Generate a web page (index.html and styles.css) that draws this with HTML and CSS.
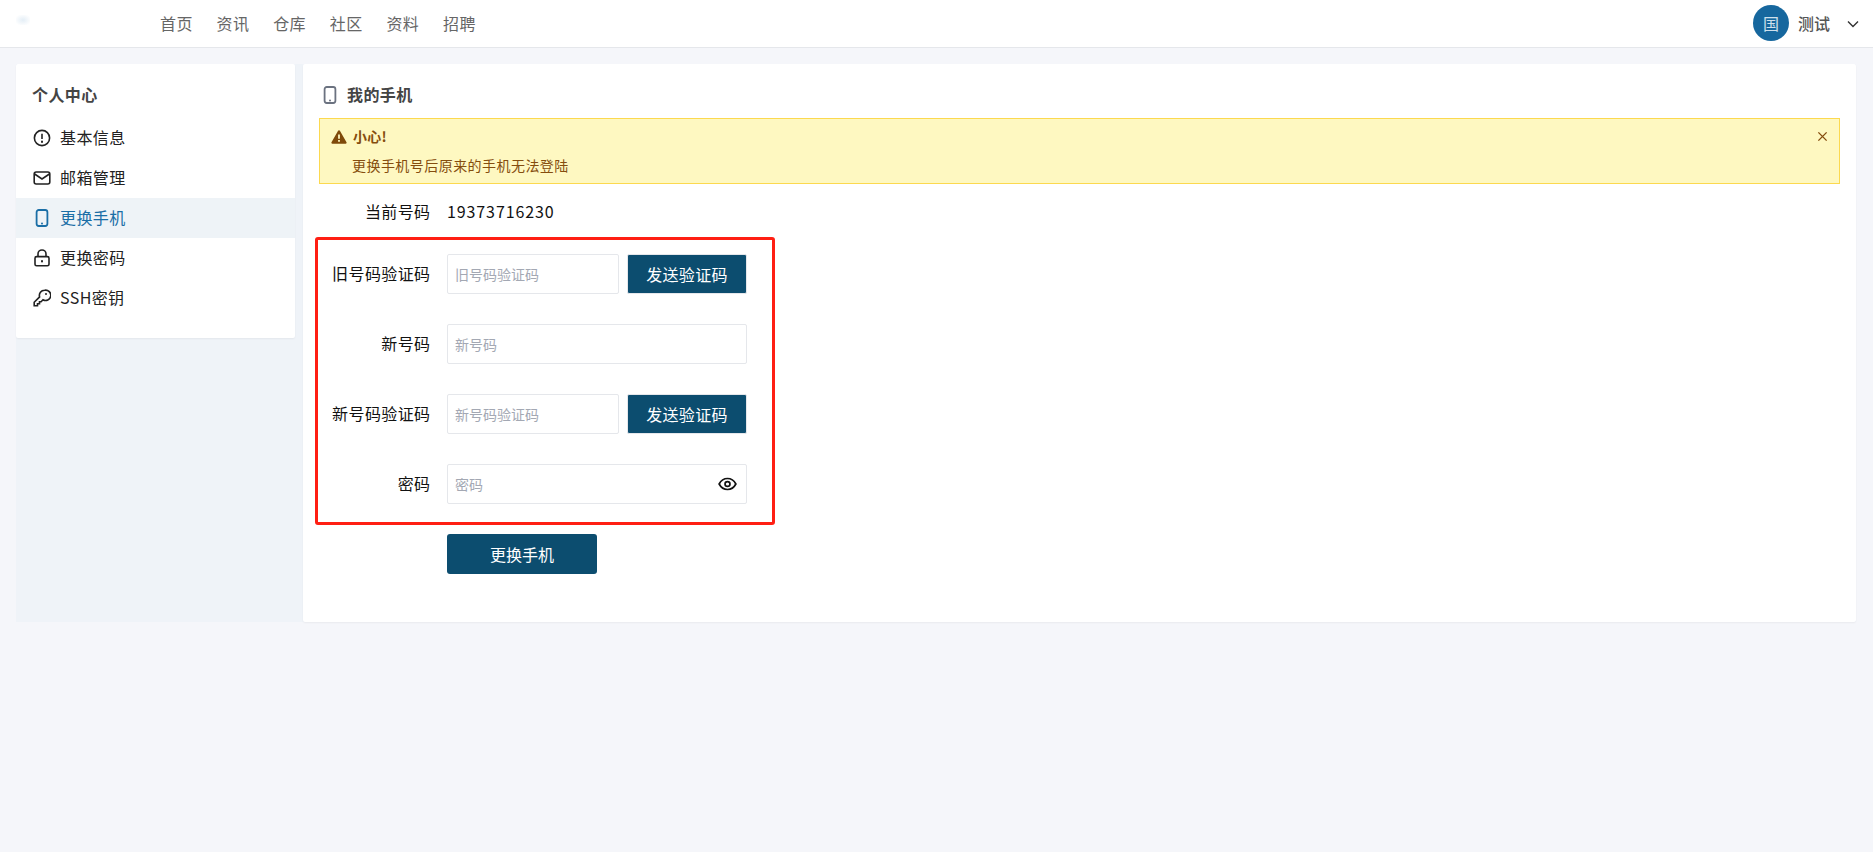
FILE: index.html
```html
<!DOCTYPE html>
<html lang="zh-CN">
<head>
<meta charset="utf-8">
<title>我的手机</title>
<link rel="stylesheet" href="styles.css">
</head>
<body>
<header class="topbar">
  <div class="logo"><span class="logo-blur"></span></div>
  <nav class="nav">
    <a>首页</a><a>资讯</a><a>仓库</a><a>社区</a><a>资料</a><a>招聘</a>
  </nav>
  <div class="user">
    <span class="avatar">国</span>
    <span class="user-name">测试</span>
    <svg class="chevron" viewBox="0 0 12 8"><path d="M1 1.5l5 5 5-5"/></svg>
  </div>
</header>
<div class="page">
  <div class="layout">
    <aside class="sidebar">
      <h2 class="side-title">个人中心</h2>
      <ul class="menu">
        <li class="menu-item">
          <svg class="ico" viewBox="0 0 18 18"><circle cx="9" cy="9" r="7.6"/><path d="M9 4.8v5.2"/><path class="dot" d="M9 12.6v.3"/></svg><span class="lift">基本信息</span>
        </li>
        <li class="menu-item">
          <svg class="ico" viewBox="0 0 18 18"><rect x="1.2" y="3" width="15.6" height="12" rx="2"/><path d="M1.6 5l7.4 5 7.4-5"/></svg><span class="lift">邮箱管理</span>
        </li>
        <li class="menu-item active">
          <svg class="ico" viewBox="0 0 18 18"><rect x="3.6" y="1" width="10.8" height="16" rx="2.2"/><path class="dot" d="M9 14.4v.1"/></svg><span class="lift">更换手机</span>
        </li>
        <li class="menu-item">
          <svg class="ico" viewBox="0 0 18 18"><rect x="2" y="7.6" width="14" height="9.2" rx="1.6"/><path d="M5 7.6V5a4 4 0 0 1 8 0v2.6"/><path class="dot" d="M9 12v.4"/></svg><span class="lift">更换密码</span>
        </li>
        <li class="menu-item">
          <svg class="ico" viewBox="0 0 18 18"><path d="M11.6 1.2a5.2 5.2 0 0 0-5 6.7L1.2 13.3v3.5h3.3v-2h2v-2h1.6l1.9-2a5.2 5.2 0 1 0 1.6-9.6z"/><path class="dot" d="M13 5v.1"/></svg><span class="lift">SSH密钥</span>
        </li>
      </ul>
    </aside>
    <main class="card">
      <h1 class="card-title">
        <svg class="title-ico" viewBox="0 0 18 18"><rect x="3.6" y="1" width="10.8" height="16" rx="2.2"/><path class="dot" d="M9 14.4v.1"/></svg><span class="lift">我的手机</span>
      </h1>
      <section class="alert">
        <div class="alert-head">
          <svg class="alert-ico" viewBox="0 0 16 16"><path d="M8 1.2a1 1 0 0 1 .9.5l6.6 11.6a1 1 0 0 1-.9 1.5H1.4a1 1 0 0 1-.9-1.5L7.1 1.7A1 1 0 0 1 8 1.2zM7.1 5.4v4.4h1.8V5.4zM7.1 11v1.8h1.8V11z" fill-rule="evenodd"/></svg>
          <strong class="alert-title">小心!</strong>
          <svg class="alert-close" viewBox="0 0 12 12"><path d="M1.5 1.5l9 9M10.5 1.5l-9 9"/></svg>
        </div>
        <p class="alert-text">更换手机号后原来的手机无法登陆</p>
      </section>
      <form class="form">
        <div class="row row-current">
          <span class="label">当前号码</span>
          <span class="phone">19373716230</span>
        </div>
        <div class="row">
          <label class="label">旧号码验证码</label>
          <input class="input input-short" placeholder="旧号码验证码">
          <button type="button" class="send">发送验证码</button>
        </div>
        <div class="row">
          <label class="label">新号码</label>
          <input class="input input-full" placeholder="新号码">
        </div>
        <div class="row">
          <label class="label">新号码验证码</label>
          <input class="input input-short" placeholder="新号码验证码">
          <button type="button" class="send">发送验证码</button>
        </div>
        <div class="row">
          <label class="label">密码</label>
          <div class="pw">
            <input class="input input-full" placeholder="密码">
            <svg class="eye" viewBox="0 0 20 14"><path d="M1.2 7C3.2 3.2 6.2 1.2 10 1.2S16.8 3.2 18.8 7C16.8 10.8 13.8 12.8 10 12.8S3.2 10.8 1.2 7z"/><circle cx="10" cy="7" r="2.6"/></svg>
          </div>
        </div>
        <div class="row">
          <span class="label"></span>
          <button type="button" class="submit">更换手机</button>
        </div>
      </form>
      <div class="highlight"></div>
    </main>
  </div>
</div>
</body>
</html>
```
FILE: styles.css
```css
* { box-sizing: border-box; }
html, body { margin: 0; height: 100%; }
body {
  background: #f5f6fa;
  color: #111;
  font-family: "Noto Sans CJK SC", "Liberation Sans", sans-serif;
  font-size: 16px;
  letter-spacing: .4px;
  overflow: hidden;
}
.topbar {
  display: flex;
  align-items: center;
  height: 48px;
  padding-left: 16px;
  padding-right: 14px;
  background: #fff;
  border-bottom: 1px solid #e5e7eb;
}
.logo { width: 144px; height: 47px; display: flex; align-items: center; }
.logo-blur {
  width: 14px;
  height: 10px;
  margin-top: -7px;
  background: radial-gradient(ellipse at center, #e4eef6 0%, #fff 85%);
}
.nav { display: flex; gap: 23.8px; color: #666; padding-bottom: 2px; }
.user { margin-left: auto; display: flex; align-items: center; }
.avatar {
  width: 36px;
  height: 36px;
  margin-top: -1px;
  border-radius: 50%;
  background: #16679e;
  color: #cfe0ec;
  display: flex;
  align-items: center;
  justify-content: center;
  letter-spacing: 0;
}
.user-name { margin-left: 9px; color: #555; font-weight: 500; letter-spacing: 0; padding-bottom: 2px; }
.chevron { width: 12px; height: 8px; margin-left: 17px; fill: none; stroke: #333; stroke-width: 1.4; }

.page { padding: 16px 17px 16px 16px; }
.layout { display: flex; height: 558px; background: #eff3f8; }
.sidebar {
  width: 279px;
  height: 274px;
  margin-right: 8px;
  background: #fff;
  box-shadow: 0 1px 2px rgba(0,0,0,.05);
  border-radius: 2px;
}
.side-title {
  margin: 0;
  padding: 18px 16px 0;
  height: 54px;
  font-size: 16px;
  line-height: 24px;
  font-weight: 700;
  color: #444;
}
.menu { list-style: none; margin: 0; padding: 0; }
.menu-item {
  display: flex;
  align-items: center;
  height: 40px;
  padding-left: 17px;
  gap: 9px;
  color: #222;
}
.lift { padding-bottom: 2px; }
.menu-item.active { background: #eef3f7; color: #1a6ea6; }
.ico { width: 18px; height: 18px; fill: none; stroke: #222; stroke-width: 1.6; flex: none; }
.active .ico { stroke: #1a6ea6; stroke-width: 1.8; }
.dot { stroke-linecap: round; stroke-width: 2; }

.card {
  position: relative;
  flex: 1;
  background: #fff;
  box-shadow: 0 1px 2px rgba(0,0,0,.05);
  border-radius: 2px;
  padding: 19px 16px 0;
}
.card-title {
  display: flex;
  align-items: center;
  gap: 8px;
  margin: 0 0 11px;
  padding-left: 3px;
  height: 24px;
  font-size: 16px;
  font-weight: 700;
  color: #444;
}
.title-ico { width: 18px; height: 18px; fill: none; stroke: #6b7280; stroke-width: 1.8; flex: none; margin-left: -1px; }

.alert {
  height: 66px;
  padding: 5px 11px 0;
  background: #fef8c1;
  border: 1px solid #fcd94f;
  color: #854d0e;
  font-size: 14px;
  letter-spacing: .45px;
}
.alert-head { display: flex; align-items: center; height: 24px; }
.alert-ico { width: 16px; height: 16px; fill: #7f4a0a; flex: none; margin-top: 1px; }
.alert-title { margin-left: 6px; font-weight: 700; letter-spacing: .3px; }
.alert-close { width: 11px; height: 11px; margin-left: auto; margin-right: 0; fill: none; stroke: #854d0e; stroke-width: 1.5; }
.alert-text { margin: 5px 0 0 21px; line-height: 24px; }

.form { display: flex; flex-direction: column; gap: 30px; margin-top: 8px; }
.row { display: flex; align-items: center; height: 40px; }
.row-current { margin-bottom: -8px; }
.label { width: 111.5px; margin-right: 16.5px; padding-bottom: 2px; text-align: right; color: #111; flex: none; letter-spacing: .4px; }
.phone { letter-spacing: .9px; color: #111; padding-bottom: 2px; }
.input {
  height: 40px;
  padding: 0 7px;
  border: 1px solid #e5e7eb;
  border-radius: 2px;
  background: #fff;
  font: inherit;
  font-size: 14px;
  letter-spacing: 0;
  color: #111;
  outline: none;
}
.input::placeholder { color: #a3a8b3; opacity: 1; }
.input-short { width: 172px; }
.input-full { width: 300px; }
.send {
  width: 120px;
  height: 40px;
  margin-left: 8px;
  border: 1px solid #e5e7eb;
  border-radius: 2px;
  background: #0c4d6f;
  color: #fff;
  font: inherit;
  letter-spacing: .3px;
}
.pw { position: relative; width: 300px; height: 40px; }
.eye {
  position: absolute;
  right: 10px;
  top: 13px;
  width: 19px;
  height: 14px;
  fill: none;
  stroke: #111;
  stroke-width: 1.8;
}
.submit {
  width: 150px;
  height: 40px;
  border: 0;
  border-radius: 3px;
  background: #0c4d6f;
  color: #fff;
  font: inherit;
  letter-spacing: 0;
}
.highlight {
  position: absolute;
  left: 12px;
  top: 173px;
  width: 460px;
  height: 288px;
  border: 3px solid #ff1f13;
  border-radius: 3px;
  pointer-events: none;
}
```
